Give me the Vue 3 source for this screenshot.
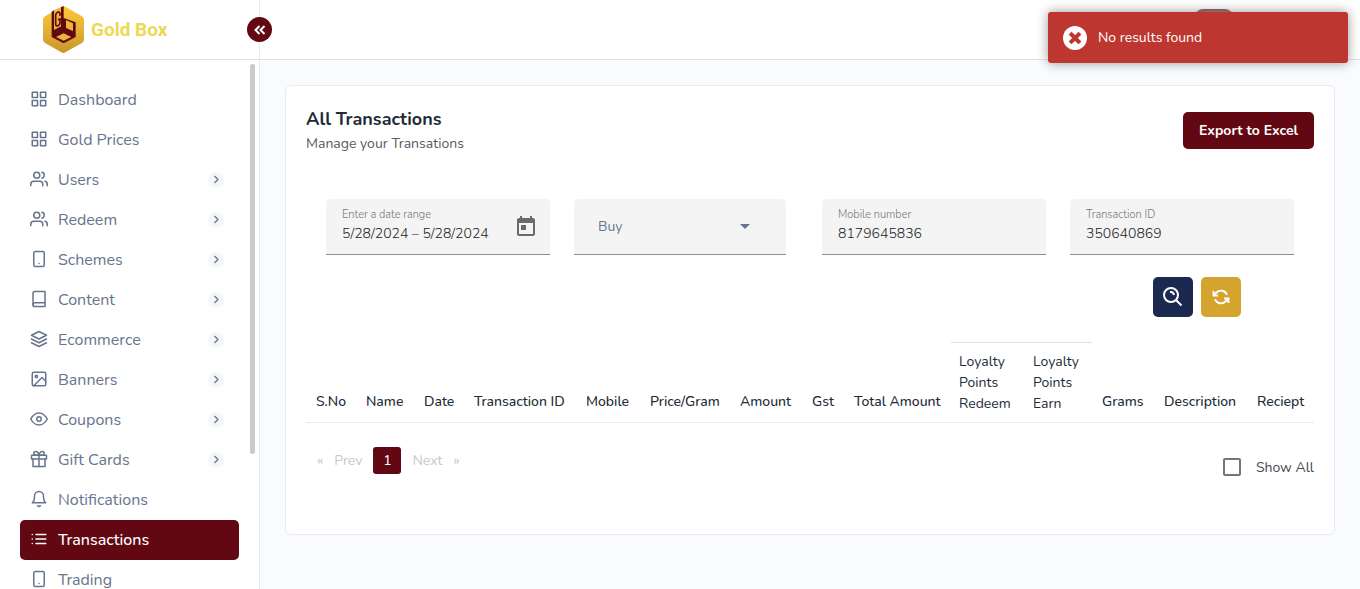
<script setup>
import { ref } from 'vue'

const icons = {
  grid: '<rect x="3" y="3" width="7" height="7"/><rect x="14" y="3" width="7" height="7"/><rect x="14" y="14" width="7" height="7"/><rect x="3" y="14" width="7" height="7"/>',
  users: '<path d="M17 21v-2a4 4 0 0 0-4-4H5a4 4 0 0 0-4 4v2"/><circle cx="9" cy="7" r="4"/><path d="M23 21v-2a4 4 0 0 0-3-3.87"/><path d="M16 3.13a4 4 0 0 1 0 7.75"/>',
  tablet: '<rect x="5" y="2" width="14" height="20" rx="2"/><path d="M12 18h.01"/>',
  book: '<path d="M4 19.500A2.500 2.500 0 0 1 6.500 17H20"/><path d="M6.500 2H20v20H6.500A2.500 2.500 0 0 1 4 19.500v-15A2.500 2.500 0 0 1 6.500 2z"/>',
  layers: '<path d="M12 2 2 7l10 5 10-5-10-5z"/><path d="m2 17 10 5 10-5"/><path d="m2 12 10 5 10-5"/>',
  image: '<rect x="3" y="3" width="18" height="18" rx="2"/><circle cx="8.500" cy="8.500" r="1.500"/><path d="m21 15-5-5L5 21"/>',
  eye: '<path d="M1 12s4-8 11-8 11 8 11 8-4 8-11 8-11-8-11-8z"/><circle cx="12" cy="12" r="3"/>',
  gift: '<path d="M20 12v10H4V12"/><path d="M2 7h20v5H2z"/><path d="M12 22V7"/><path d="M12 7H7.500a2.500 2.500 0 0 1 0-5C11 2 12 7 12 7z"/><path d="M12 7h4.500a2.500 2.500 0 0 0 0-5C13 2 12 7 12 7z"/>',
  bell: '<path d="M18 8A6 6 0 0 0 6 8c0 7-3 9-3 9h18s-3-2-3-9"/><path d="M13.730 21a2 2 0 0 1-3.460 0"/>',
  list: '<path d="M8 6h13M8 12h13M8 18h13M3 6h.01M3 12h.01M3 18h.01"/>'
}

const menu = [
  { label: 'Dashboard', icon: 'grid' },
  { label: 'Gold Prices', icon: 'grid' },
  { label: 'Users', icon: 'users', sub: true },
  { label: 'Redeem', icon: 'users', sub: true },
  { label: 'Schemes', icon: 'tablet', sub: true },
  { label: 'Content', icon: 'book', sub: true },
  { label: 'Ecommerce', icon: 'layers', sub: true },
  { label: 'Banners', icon: 'image', sub: true },
  { label: 'Coupons', icon: 'eye', sub: true },
  { label: 'Gift Cards', icon: 'gift', sub: true },
  { label: 'Notifications', icon: 'bell' },
  { label: 'Transactions', icon: 'list', active: true },
  { label: 'Trading', icon: 'tablet' }
]

const columns = [
  { label: 'S.No', share: 50 },
  { label: 'Name', share: 58 },
  { label: 'Date', share: 50 },
  { label: 'Transaction ID', share: 112 },
  { label: 'Mobile', share: 64 },
  { label: 'Price/Gram', share: 90 },
  { label: 'Amount', share: 72 },
  { label: 'Gst', share: 42 },
  { label: 'Total Amount', share: 107 },
  { label: 'Loyalty Points Redeem', share: 74, points: true },
  { label: 'Loyalty Points Earn', share: 67, points: true },
  { label: 'Grams', share: 62 },
  { label: 'Description', share: 93 },
  { label: 'Reciept', share: 67 }
]
const total = columns.reduce((sum, c) => sum + c.share, 0)

const range = ref('5/28/2024 – 5/28/2024')
const type = ref('Buy')
const mobile = ref('8179645836')
const transactionId = ref('350640869')
const showAll = ref(false)
</script>

<template>
  <div class="page">
    <header class="topbar">
      <div class="brand">
        <a class="brand-link" href="#">
          <svg class="logo" viewBox="129 20 123 141" aria-hidden="true">
            <defs>
              <linearGradient id="gold" x1="0" y1="0" x2="0" y2="1">
                <stop offset="0" stop-color="#fcc93a" />
                <stop offset="0.500" stop-color="#e5b134" />
                <stop offset="1" stop-color="#c7952c" />
              </linearGradient>
            </defs>
            <path fill="url(#gold)" d="M184 22q6-3 12 0l50 29q6 4 6 10v60q0 6-6 10l-50 28q-6 4-12 0l-49-28q-6-4-6-10V61q0-6 6-10z" />
            <path fill="#620812" d="M155 37l7-4v58l21-10V24l8-4v36l36 13v44l-36 19-36-19z" />
            <path fill="#eab636" d="M162 33l21-9v57l-21 10zM198 62l21 10v23l-21-9zM168 113l23-11 23 11-23 11z" />
            <path fill="none" stroke="#620812" stroke-width="5" d="M180 49v-7q-1-5-7-3-6 2-6 9v27q1 7 7 4 6-2 6-10v-10l-6 2" />
          </svg>
          <span class="brand-name">Gold Box</span>
        </a>
        <button class="collapse" type="button" aria-label="Collapse menu">
          <svg viewBox="0 0 12 12" width="12" height="12"><path d="M5.500 2 1.500 6l4 4M10.500 2 6.500 6l4 4" /></svg>
        </button>
      </div>
      <span class="avatar"></span>
    </header>

    <div class="body">
      <aside class="sidebar">
        <nav>
          <a v-for="m in menu" :key="m.label" href="#" class="item" :class="{ active: m.active }">
            <svg class="item-icon" viewBox="0 0 24 24" v-html="icons[m.icon]"></svg>
            <span>{{ m.label }}</span>
            <svg v-if="m.sub" class="arrow" viewBox="0 0 16 16"><circle cx="8" cy="8" r="8" /><path d="m6.500 4 3.500 3.500L6.500 11" /></svg>
          </a>
        </nav>
        <div class="thumb"></div>
      </aside>

      <main class="content">
        <section class="card">
          <div class="card-head">
            <div>
              <h1>All Transactions</h1>
              <p>Manage your Transations</p>
            </div>
            <button class="export" type="button">Export to Excel</button>
          </div>

          <form class="filters" @submit.prevent>
            <div class="field">
              <div class="field-text">
                <label for="range">Enter a date range</label>
                <input id="range" v-model="range" type="text" />
              </div>
              <button class="calendar" type="button" aria-label="Open calendar">
                <svg viewBox="0 0 24 24" width="24" height="24"><path d="M19 3h-1V1h-2v2H8V1H6v2H5c-1.110 0-2 .9-2 2v14c0 1.100.9 2 2 2h14c1.100 0 2-.9 2-2V5c0-1.100-.9-2-2-2zm0 16H5V8h14zM7 10h5v5H7z" /></svg>
              </button>
            </div>
            <div class="field select-field">
              <select v-model="type" aria-label="Transaction type">
                <option>Buy</option>
                <option>Sell</option>
              </select>
              <svg class="caret" viewBox="0 0 10 5" width="10" height="5"><path d="M0 0h10L5 5z" /></svg>
            </div>
            <div class="field">
              <div class="field-text">
                <label for="mobile">Mobile number</label>
                <input id="mobile" v-model="mobile" type="text" />
              </div>
            </div>
            <div class="field">
              <div class="field-text">
                <label for="txn">Transaction ID</label>
                <input id="txn" v-model="transactionId" type="text" />
              </div>
            </div>
          </form>

          <div class="actions">
            <button class="search" type="button" aria-label="Search">
              <svg viewBox="0 0 20 20" width="20" height="20"><circle cx="8" cy="8" r="7" /><path d="m13 13 5.500 5.500M7 5q3.500-.5 4 3" /></svg>
            </button>
            <button class="reset" type="button" aria-label="Reset">
              <svg viewBox="0 0 24 24" width="18" height="18"><path d="M2 4v6h6M22 20v-6h-6" /><path d="M20 9A8.500 8.500 0 0 0 6 6l-4 4m20 4-4 4A8.500 8.500 0 0 1 4 15" /></svg>
            </button>
          </div>

          <table>
            <colgroup>
              <col v-for="c in columns" :key="c.label" :style="{ width: (c.share / total) * 100 + '%' }" />
            </colgroup>
            <thead>
              <tr>
                <th v-for="c in columns" :key="c.label" scope="col" :class="{ points: c.points }">{{ c.label }}</th>
              </tr>
            </thead>
          </table>

          <div class="card-foot">
            <div class="pager">
              <button class="step" type="button" disabled>«</button>
              <button type="button" disabled>Prev</button>
              <button class="current" type="button">1</button>
              <button type="button" disabled>Next</button>
              <button class="step" type="button" disabled>»</button>
            </div>
            <label class="show-all"><input v-model="showAll" type="checkbox" />Show All</label>
          </div>
        </section>
      </main>
    </div>

    <div class="toast" role="alert">
      <svg viewBox="0 0 24 24" width="24" height="24"><circle cx="12" cy="12" r="12" fill="#fff" /><path d="m8.500 8.500 7 7M15.500 8.500l-7 7" stroke="#bd362f" stroke-width="4" stroke-linecap="square" /></svg>
      <span>No results found</span>
    </div>
  </div>
</template>

<style>
body {
  background: #fafbfe;
}
</style>

<style scoped>
.page,
.page * {
  box-sizing: border-box;
}
.page {
  display: flex;
  flex-direction: column;
  height: 100vh;
  overflow: hidden;
  font-family: Nunito, Lato, "Open Sans", sans-serif;
  font-size: 14px;
  color: #212b36;
}
button,
input,
select {
  font: inherit;
}
button {
  border: 0;
  padding: 0;
  cursor: pointer;
}
a {
  text-decoration: none;
}
.topbar {
  display: flex;
  flex: none;
  justify-content: space-between;
  height: 60px;
  background: #fff;
  border-bottom: 1px solid #dfe1e6;
}
.brand {
  position: relative;
  display: flex;
  align-items: center;
  width: 260px;
  border-right: 1px solid #e8ebed;
  padding-left: 43px;
}
.brand-link {
  display: flex;
  align-items: center;
  gap: 7px;
}
.logo {
  width: 41px;
  height: 47px;
}
.brand-name {
  font-family: Roboto, sans-serif;
  font-size: 19px;
  font-weight: 700;
  color: #ecd953;
}
.collapse {
  position: absolute;
  top: 17px;
  right: -13px;
  display: flex;
  align-items: center;
  justify-content: center;
  width: 25px;
  height: 25px;
  border-radius: 50%;
  background: #620812;
}
.collapse path {
  fill: none;
  stroke: #fff;
  stroke-width: 2;
}
.avatar {
  width: 38px;
  height: 38px;
  margin: 9px 127px 0 0;
  border-radius: 8px;
  background: #7c3a44;
}
.body {
  display: flex;
  flex: 1;
  min-height: 0;
}
.sidebar {
  position: relative;
  flex: none;
  width: 260px;
  padding: 20px 20px 0;
  background: #fff;
  border-right: 1px solid #e8ebed;
  overflow: hidden;
}
.item {
  display: flex;
  align-items: center;
  gap: 10px;
  height: 40px;
  padding: 0 15px 0 10px;
  border-radius: 5px;
  font-size: 16px;
  line-height: 18px;
  color: #67748e;
}
.item.active {
  background: #620812;
  color: #fff;
  font-weight: 500;
}
.item-icon {
  width: 18px;
  height: 18px;
  margin-bottom: 2px;
  fill: none;
  stroke: currentColor;
  stroke-width: 2;
  stroke-linecap: round;
  stroke-linejoin: round;
}
.arrow {
  width: 16px;
  height: 16px;
  margin-left: auto;
}
.arrow circle {
  fill: #f5f6f8;
}
.arrow path {
  fill: none;
  stroke: #67748e;
  stroke-width: 1.3;
}
.thumb {
  position: absolute;
  top: 4px;
  right: 4px;
  width: 5px;
  height: 390px;
  border-radius: 4px;
  background: #cacaca;
}
.content {
  flex: 1;
  min-width: 0;
  padding: 25px;
}
.card {
  padding: 20px 20px 57px;
  background: #fff;
  border: 1px solid #e8ebed;
  border-radius: 6px;
}
.card-head {
  display: flex;
  align-items: flex-start;
  justify-content: space-between;
}
h1 {
  margin: 0;
  font-size: 18px;
  font-weight: 700;
  line-height: 26px;
}
p {
  margin: 0;
  line-height: 24px;
  color: #555b63;
}
.export {
  height: 37px;
  margin-top: 6px;
  padding: 0 16px;
  border-radius: 5px;
  background: #620812;
  color: #fff;
  font-weight: 700;
}
.filters {
  display: grid;
  grid-template-columns: repeat(4, 1fr);
  gap: 24px;
  margin: 43px 20px 0;
}
.field {
  display: flex;
  justify-content: space-between;
  height: 56px;
  padding: 9px 12px 0 16px;
  background: #f4f4f4;
  border-bottom: 1px solid #8f8f8f;
  border-radius: 4px 4px 0 0;
}
.field-text {
  display: flex;
  flex: 1;
  flex-direction: column;
  gap: 1px;
  min-width: 0;
}
.field label {
  font-size: 11px;
  font-weight: 300;
  line-height: 14px;
  color: #777;
}
.field input {
  width: 100%;
  height: 20px;
  padding: 0;
  border: 0;
  outline: 0;
  background: none;
  font-weight: 300;
  color: #222;
}
.calendar {
  height: 24px;
  margin-top: 7px;
  background: none;
}
.calendar svg {
  display: block;
  fill: #6b6b6b;
}
.select-field {
  align-items: center;
  margin-right: 12px;
  padding: 0 36px 0 24px;
}
select {
  flex: 1;
  padding: 0;
  border: 0;
  outline: 0;
  appearance: none;
  background: none;
  color: #67748e;
}
.caret {
  fill: #67748e;
}
.actions {
  display: flex;
  justify-content: flex-end;
  gap: 8px;
  margin: 22px 73px 25px 0;
}
.actions button {
  display: flex;
  align-items: center;
  justify-content: center;
  width: 40px;
  height: 40px;
  border-radius: 5px;
}
.actions svg {
  fill: none;
  stroke: #fff;
  stroke-width: 2;
}
.actions .search {
  background: #1b2850;
}
.actions .reset {
  background: #d4a42f;
}
.actions .reset svg {
  stroke-width: 2.5;
}
table {
  width: 100%;
  table-layout: fixed;
  border-collapse: separate;
  border-spacing: 0;
}
th {
  padding: 10px 0 10px 10px;
  border-bottom: 1px solid #e8ebed;
  font-weight: 500;
  line-height: 21px;
  text-align: left;
  vertical-align: bottom;
  white-space: nowrap;
}
th.points {
  padding: 8px;
  border-top: 1px solid #dee2e6;
  font-weight: 400;
  white-space: normal;
}
.card-foot {
  display: flex;
  align-items: flex-start;
  justify-content: space-between;
  padding-top: 24px;
}
.pager {
  display: flex;
  align-items: center;
  gap: 11px;
  padding-left: 11px;
}
.pager button {
  background: none;
  color: #c6c8cb;
}
.pager .current {
  width: 28px;
  height: 27px;
  border-radius: 3px;
  background: #620812;
  color: #fff;
}
.show-all {
  display: flex;
  align-items: center;
  gap: 15px;
  height: 20px;
  margin-top: 10px;
  color: #444b54;
}
.show-all input {
  width: 18px;
  height: 18px;
  margin: 0;
  appearance: none;
  border: 2px solid #757575;
  border-radius: 2px;
}
.show-all input:checked {
  background: #620812;
}
.toast {
  position: absolute;
  top: 12px;
  right: 12px;
  display: flex;
  align-items: center;
  gap: 11px;
  width: 300px;
  height: 51px;
  padding: 0 15px;
  border-radius: 3px;
  background: #bd362f;
  box-shadow: 0 0 12px #999;
  color: #fff;
}
</style>
